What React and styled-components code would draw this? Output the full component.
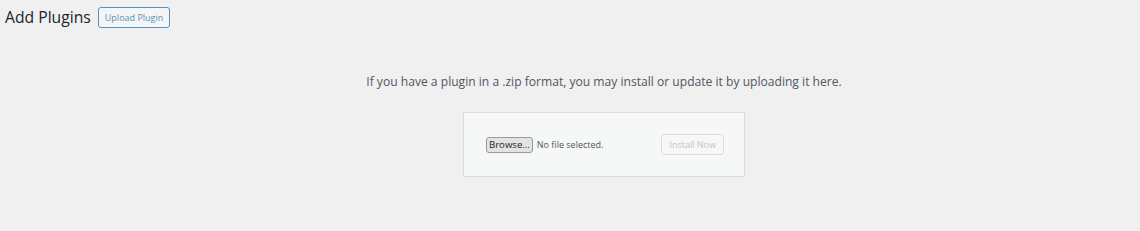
import React from "react";
import styled, { createGlobalStyle } from "styled-components";

const GlobalStyle = createGlobalStyle`
  html, body {
    margin: 0;
    padding: 0;
    background: #f0f0f1;
    font-family: "Open Sans", "Noto Sans", sans-serif;
    color: #3c434a;
  }
`;

const Page = styled.div`
  width: 1140px;
  height: 231px;
  background: #f0f0f1;
  box-sizing: border-box;
  padding: 5px 0 0 5px;
`;

const Header = styled.div`
  display: flex;
  align-items: center;
  gap: 7px;
`;

const Title = styled.h1`
  margin: 0;
  font-size: 15.7px;
  font-weight: 400;
  color: #1d2327;
  line-height: 24px;
`;

const HeaderButton = styled.button`
  height: 21px;
  padding: 0 6px;
  font-family: inherit;
  font-size: 9px;
  color: #2271b1;
  background: #f6f7f7;
  border: 1px solid #2271b1;
  border-radius: 3px;
  opacity: 0.75;
`;

const Upload = styled.div`
  display: flex;
  flex-direction: column;
  align-items: center;
  padding: 44px 0 0 63px;
`;

const Intro = styled.p`
  margin: 0 0 22px;
  font-size: 12.1px;
  color: #50575e;
`;

const Card = styled.form`
  width: 282px;
  height: 65px;
  box-sizing: border-box;
  display: flex;
  align-items: center;
  justify-content: space-between;
  padding: 0 22px 0 22px;
  background: #f6f7f7;
  border: 1px solid #dcdcde;
`;

const FileField = styled.div`
  display: flex;
  align-items: center;
  gap: 4px;
  font-size: 9px;
  color: #50575e;
`;

const Browse = styled.span`
  height: 16px;
  box-sizing: border-box;
  padding: 0 2px;
  display: flex;
  align-items: center;
  font-size: 9.6px;
  color: #1d2327;
  background: #e3e3e3;
  border: 1px solid #9a9a9a;
  border-radius: 3px;
`;

const Install = styled.button`
  height: 21px;
  padding: 0 7px;
  margin-right: -2px;
  font-family: inherit;
  font-size: 9px;
  color: #c3c4c7;
  background: #f6f7f7;
  border: 1px solid #dcdcde;
  border-radius: 3px;
`;

export default function App() {
  return (
    <>
      <GlobalStyle />
      <Page>
        <Header>
          <Title>Add Plugins</Title>
          <HeaderButton>Upload Plugin</HeaderButton>
        </Header>
        <Upload>
          <Intro>
            If you have a plugin in a .zip format, you may install or update it by uploading it here.
          </Intro>
          <Card>
            <FileField>
              <Browse>Browse...</Browse>
              <span>No file selected.</span>
            </FileField>
            <Install type="button" disabled>
              Install Now
            </Install>
          </Card>
        </Upload>
      </Page>
    </>
  );
}
